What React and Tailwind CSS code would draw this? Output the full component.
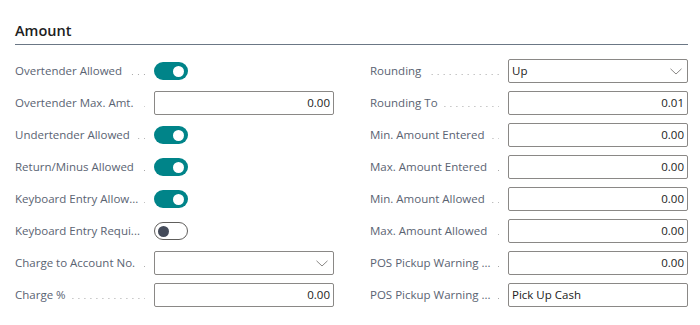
import React from "react";

const leftFields = [
  { label: "Overtender Allowed", type: "toggle", on: true },
  { label: "Overtender Max. Amt.", type: "number", value: "0.00" },
  { label: "Undertender Allowed", type: "toggle", on: true },
  { label: "Return/Minus Allowed", type: "toggle", on: true },
  { label: "Keyboard Entry Allow...", type: "toggle", on: true },
  { label: "Keyboard Entry Requi...", type: "toggle", on: false },
  { label: "Charge to Account No.", type: "select", value: "" },
  { label: "Charge %", type: "number", value: "0.00" },
];

const rightFields = [
  { label: "Rounding", type: "select", value: "Up" },
  { label: "Rounding To", type: "number", value: "0.01" },
  { label: "Min. Amount Entered", type: "number", value: "0.00" },
  { label: "Max. Amount Entered", type: "number", value: "0.00" },
  { label: "Min. Amount Allowed", type: "number", value: "0.00" },
  { label: "Max. Amount Allowed", type: "number", value: "0.00" },
  { label: "POS Pickup Warning ...", type: "number", value: "0.00" },
  { label: "POS Pickup Warning ...", type: "text", value: "Pick Up Cash" },
];

function Chevron() {
  return (
    <svg width="12" height="7" viewBox="0 0 12 7" fill="none">
      <path d="M0.5 0.8 L6 6 L11.5 0.8" stroke="#8a8886" strokeWidth="1" />
    </svg>
  );
}

function Toggle({ on }) {
  if (on) {
    return (
      <div className="w-[34px] h-[18px] rounded-full bg-[#008489] flex items-center justify-end px-[4px]">
        <div className="w-[11px] h-[11px] rounded-full bg-white" />
      </div>
    );
  }
  return (
    <div className="w-[34px] h-[18px] rounded-full bg-white border border-[#605e5c] flex items-center justify-start px-[3px]">
      <div className="w-[11px] h-[11px] rounded-full bg-[#444b5a]" />
    </div>
  );
}

function Field({ field }) {
  if (field.type === "toggle") {
    return (
      <div className="w-[180px] h-[24px] flex items-center">
        <Toggle on={field.on} />
      </div>
    );
  }
  if (field.type === "select") {
    return (
      <div className="w-[180px] h-[24px] border border-[#8a8886] rounded-[2px] bg-white flex items-center justify-between pl-[3px] pr-[5px] text-[#212121]">
        <span>{field.value}</span>
        <Chevron />
      </div>
    );
  }
  return (
    <div
      className={
        field.type === "number"
          ? "w-[180px] h-[24px] border border-[#8a8886] rounded-[2px] bg-white flex items-center justify-end px-[3px] text-[#212121]"
          : "w-[180px] h-[24px] border border-[#8a8886] rounded-[2px] bg-white flex items-center justify-start px-[3px] text-[#212121]"
      }
    >
      {field.value}
    </div>
  );
}

function Row({ field, labelWidth }) {
  return (
    <div className="flex items-center h-[24px]">
      <div className="flex items-center" style={{ width: labelWidth }}>
        <span className="whitespace-nowrap text-[#5a6372]">{field.label}</span>
        <div className="flex-1 h-px ml-[6px] mr-[9px] mt-[7px] bg-[linear-gradient(to_left,#a8a8a8_1px,transparent_1px)] bg-size-[6px_1px] bg-right bg-repeat-x" />
      </div>
      <Field field={field} />
    </div>
  );
}

export default function App() {
  return (
    <div className="w-[700px] h-[325px] bg-white pl-[15px] pt-[21px] font-['Open_Sans','Noto_Sans',sans-serif] text-[11.5px]">
      <div className="w-[673px] border-b border-[#6b7785] pb-[3px]">
        <h2 className="text-[14.5px] leading-[20px] font-semibold text-[#212121]">Amount</h2>
      </div>
      <div className="flex gap-x-[36px] mt-[14px]">
        <div className="flex flex-col gap-y-[8px]">
          {leftFields.map((f, i) => (
            <Row key={i} field={f} labelWidth={139} />
          ))}
        </div>
        <div className="flex flex-col gap-y-[8px]">
          {rightFields.map((f, i) => (
            <Row key={i} field={f} labelWidth={138} />
          ))}
        </div>
      </div>
    </div>
  );
}
